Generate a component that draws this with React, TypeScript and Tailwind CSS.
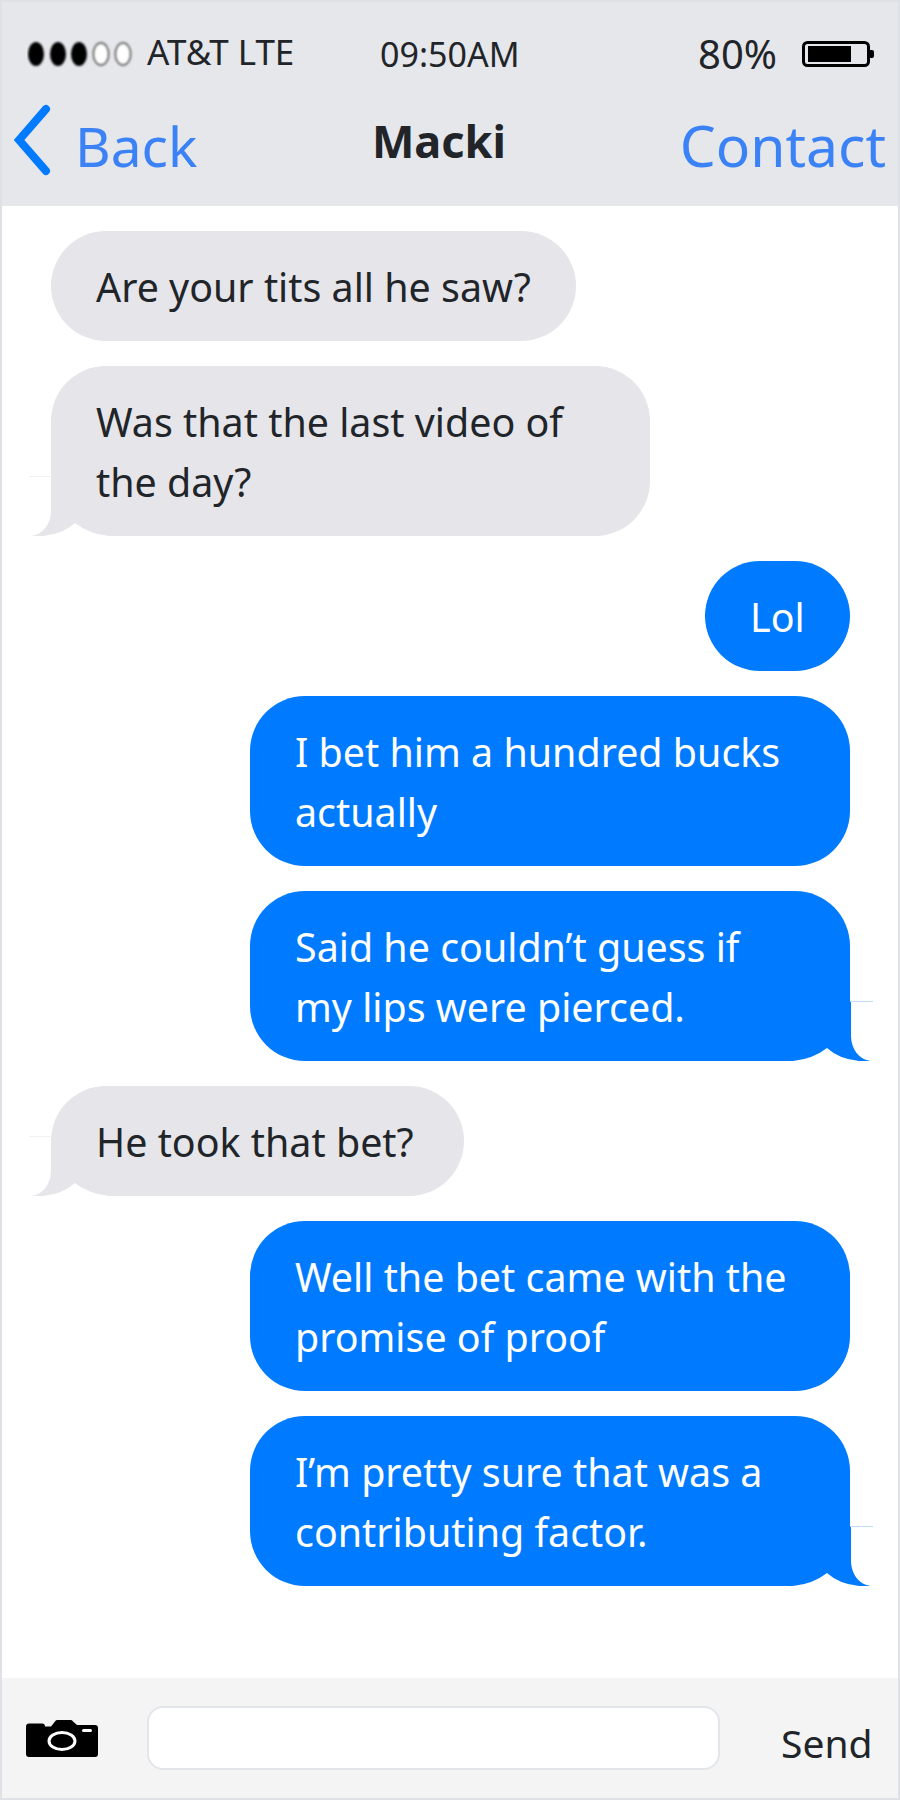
const messages = [
  { side: "in", lines: ["Are your tits all he saw?"], width: "w-[525px]", tail: false },
  { side: "in", lines: ["Was that the last video of", "the day?"], width: "w-[599px]", tail: true },
  { side: "out", lines: ["Lol"], width: "w-[145px]", tail: false },
  { side: "out", lines: ["I bet him a hundred bucks", "actually"], width: "w-[600px]", tail: false },
  { side: "out", lines: ["Said he couldn’t guess if", "my lips were pierced."], width: "w-[600px]", tail: true },
  { side: "in", lines: ["He took that bet?"], width: "w-[413px]", tail: true },
  { side: "out", lines: ["Well the bet came with the", "promise of proof"], width: "w-[600px]", tail: false },
  { side: "out", lines: ["I’m pretty sure that was a", "contributing factor."], width: "w-[600px]", tail: true },
];

function Tail({ side }: { side: string }) {
  const fill = side === "out" ? "#007bff" : "#e5e5ea";
  return (
    <svg
      width="100"
      height="60"
      viewBox="0 0 100 60"
      className={side === "out" ? "absolute bottom-0 right-[-23px]" : "absolute bottom-0 left-[-22px] -scale-x-100"}
    >
      <path d="M20 0H78V34C78 50 88 60 100 60H20Z" fill={fill} />
      <path d="M20 60Q40 58 54 47Q66 58 86 60Z" fill="#fff" />
      <rect x="77" y="0" width="23" height="1" fill={side === "out" ? "#bfdcff" : "#f1f1f4"} />
    </svg>
  );
}

function Signal() {
  return (
    <svg width="112" height="30" viewBox="0 0 112 30" className="shrink-0">
      <defs>
        <filter id="soft">
          <feGaussianBlur stdDeviation="0.8" />
        </filter>
      </defs>
      <g filter="url(#soft)">
        <ellipse cx="9" cy="15" rx="8" ry="12" fill="#000" />
        <ellipse cx="31" cy="15" rx="8" ry="12" fill="#000" />
        <ellipse cx="52" cy="15" rx="8" ry="12" fill="#000" />
        <ellipse cx="74" cy="15" rx="7.5" ry="11" fill="#fff" stroke="#666" strokeWidth="2" />
        <ellipse cx="96" cy="15" rx="7.5" ry="11" fill="#fff" stroke="#666" strokeWidth="2" />
      </g>
    </svg>
  );
}

function Battery() {
  return (
    <svg width="72" height="26" viewBox="0 0 72 26">
      <rect x="1.5" y="1.5" width="65" height="23" rx="4" fill="none" stroke="#000" strokeWidth="3" />
      <rect x="6" y="5" width="43" height="16" fill="#000" />
      <path d="M68 9h2a2 2 0 0 1 2 2v4a2 2 0 0 1-2 2h-2z" fill="#000" />
    </svg>
  );
}

function Camera() {
  return (
    <svg width="72" height="37" viewBox="0 0 72 37" className="shrink-0">
      <path
        d="M3 3.5h13a3 3 0 0 1 3 3h6l4-5a3 3 0 0 1 2-1.5h14a3 3 0 0 1 2 1.5l4 3.500h18a3 3 0 0 1 3 3V34a3 3 0 0 1-3 3H3a3 3 0 0 1-3-3V7a3 3 0 0 1 3-3.500z"
        fill="#000"
      />
      <ellipse cx="36" cy="21" rx="13" ry="8.500" fill="none" stroke="#fff" strokeWidth="3" />
      <rect x="56" y="9" width="10" height="3" rx="1.500" fill="#fff" />
    </svg>
  );
}

export default function App() {
  return (
    <div className="flex h-[1800px] w-[900px] flex-col border-2 border-[#dee2e6] bg-white font-['Noto_Sans',sans-serif] text-[#212529]">
      <header className="h-[204px] shrink-0 bg-[#e5e7eb]">
        <div className="flex h-[96px] items-center pl-[25px] pr-[24px] pt-[8px]">
          <Signal />
          <span className="ml-[8px] w-[233px] pb-[6px] text-[35px] leading-none whitespace-nowrap">AT&amp;T LTE</span>
          <span className="w-[318px] text-[34px] leading-none whitespace-nowrap">09:50AM</span>
          <span className="w-[104px] text-[40px] leading-none whitespace-nowrap">80%</span>
          <Battery />
        </div>
        <div className="flex h-[108px] items-center pb-[14px] pl-[12px] pr-[12px]">
          <svg width="42" height="76" viewBox="0 0 42 76" className="mb-[10px] shrink-0">
            <path d="M32 7L5 38L32 69" fill="none" stroke="#007bff" strokeWidth="8" strokeLinecap="round" strokeLinejoin="miter" />
          </svg>
          <span className="ml-[19px] w-[297px] text-[55px] leading-none text-[#3b82f6] whitespace-nowrap">Back</span>
          <span className="w-[309px] pb-[10px] text-[45px] leading-none font-bold whitespace-nowrap">Macki</span>
          <span className="ml-[-1px] text-[57px] leading-none text-[#3b82f6] whitespace-nowrap">Contact</span>
        </div>
      </header>
      <main className="flex flex-1 flex-col gap-[25px] pt-[25px] pl-[49px] pr-[48px]">
        {messages.map((m) => (
          <div
            key={m.lines[0]}
            className={`relative rounded-[55px] px-[45px] pt-[26px] pb-[24px] text-[39.4px] leading-[60px] whitespace-nowrap ${m.width} ${
              m.side === "out" ? "self-end bg-[#007bff] text-white" : "self-start bg-[#e5e5ea] text-[#212529]"
            }`}
          >
            {m.tail ? <Tail side={m.side} /> : null}
            <div className="relative">
              {m.lines.map((line) => (
                <div key={line}>{line}</div>
              ))}
            </div>
          </div>
        ))}
      </main>
      <footer className="flex h-[120px] shrink-0 items-center bg-[#f4f4f4] pl-[24px]">
        <Camera />
        <div className="ml-[49px] h-[64px] w-[573px] rounded-[16px] border-2 border-[#e2e5ea] bg-white" />
        <span className="ml-[61px] pt-[8px] text-[39px] leading-none whitespace-nowrap">Send</span>
      </footer>
    </div>
  );
}
